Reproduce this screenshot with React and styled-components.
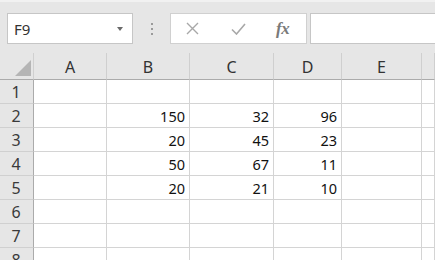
import React from "react";
import styled, { createGlobalStyle } from "styled-components";

const GlobalStyle = createGlobalStyle`
  html, body {
    margin: 0;
    padding: 0;
    background: #ffffff;
    overflow: hidden;
  }
  body {
    font-family: "Noto Sans", "Open Sans", sans-serif;
  }
`;

const Page = styled.div`
  width: 435px;
  height: 260px;
  overflow: hidden;
  background: #fff;
`;

// formula bar strip
const Toolbar = styled.div`
  height: 53px;
  box-sizing: border-box;
  background: #e6e6e6;
  border-top: 2px solid #f1f1f1;
  display: flex;
  align-items: flex-start;
  padding: 11px 0 0 7px;
`;

const NameBox = styled.div`
  width: 126px;
  height: 31px;
  box-sizing: border-box;
  background: #fff;
  border: 1px solid #c6c6c6;
  display: flex;
  align-items: center;
  justify-content: space-between;
  padding: 0 9px 0 6px;
  font-size: 15px;
  color: #333;
`;

const DropArrow = styled.span`
  width: 0;
  height: 0;
  border-left: 3.5px solid transparent;
  border-right: 3.5px solid transparent;
  border-top: 4px solid #6a6a6a;
`;

const Grip = styled.div`
  width: 37px;
  height: 31px;
  display: flex;
  flex-direction: column;
  align-items: center;
  justify-content: center;
  gap: 3px;
  padding-top: 1px;
  box-sizing: border-box;
`;

const Dot = styled.span`
  width: 2px;
  height: 2px;
  background: #9a9a9a;
`;

const FormulaButtons = styled.div`
  width: 137px;
  height: 31px;
  box-sizing: border-box;
  background: #fff;
  border: 1px solid #d0d0d0;
  display: flex;
  align-items: center;
  padding-left: 15px;
  gap: 0;
`;

const IconSlot = styled.span`
  width: ${(p) => p.$w}px;
  display: flex;
  align-items: center;
  justify-content: flex-start;
`;

const Fx = styled.span`
  font-family: "Liberation Serif", "DejaVu Serif", serif;
  font-style: italic;
  font-weight: bold;
  font-size: 17px;
  color: #7a7a7a;
  letter-spacing: -0.5px;
`;

const FormulaInput = styled.div`
  flex: 1;
  height: 31px;
  margin-left: 3px;
  box-sizing: border-box;
  background: #fff;
  border: 1px solid #c6c6c6;
  border-right: none;
`;

// sheet grid
const Sheet = styled.div`
  display: grid;
  grid-template-columns: 34px 73px 83px 84px 68px 80px 1fr;
  grid-template-rows: 27px repeat(8, 24px);
`;

const HeadCell = styled.div`
  box-sizing: border-box;
  background: #e6e6e6;
  border-right: 1px solid ${(p) => (p.$corner ? "#d0d0d0" : "#cfcfcf")};
  border-bottom: 1px solid #ababab;
  display: flex;
  align-items: center;
  justify-content: center;
  font-size: 16px;
  color: #333;
  padding-top: 2px;
`;

const Corner = styled(HeadCell)`
  align-items: flex-end;
  justify-content: flex-end;
  padding: 0 2px 3px 0;
`;

const Triangle = styled.span`
  width: 16px;
  height: 16px;
  background: #b5b5b5;
  clip-path: polygon(100% 0, 100% 100%, 0 100%);
`;

const RowHead = styled.div`
  box-sizing: border-box;
  background: #e6e6e6;
  border-right: 1px solid #ababab;
  border-bottom: 1px solid #d0d0d0;
  display: flex;
  align-items: center;
  justify-content: center;
  font-size: 16px;
  color: #3a3a3a;
  padding-right: 1px;
`;

const Cell = styled.div`
  box-sizing: border-box;
  border-right: 1px solid #d4d4d4;
  border-bottom: 1px solid #d4d4d4;
  display: flex;
  align-items: center;
  justify-content: flex-end;
  padding: 1px 4px 0 0;
  font-size: 14.5px;
  color: #111;
`;

const columns = ["A", "B", "C", "D", "E", ""];

const data = {
  2: [150, 32, 96],
  3: [20, 45, 23],
  4: [50, 67, 11],
  5: [20, 21, 10],
};

const App = () => {
  const rows = [1, 2, 3, 4, 5, 6, 7, 8];

  return (
    <Page>
      <GlobalStyle />
      <Toolbar>
        <NameBox>
          F9
          <DropArrow />
        </NameBox>
        <Grip>
          <Dot />
          <Dot />
          <Dot />
        </Grip>
        <FormulaButtons>
          <IconSlot $w={45}>
            <svg width="13" height="13" viewBox="0 0 13 13">
              <path d="M1 1 L12 12 M12 1 L1 12" stroke="#a8a8a8" strokeWidth="1.4" fill="none" />
            </svg>
          </IconSlot>
          <IconSlot $w={45}>
            <svg width="15" height="12" viewBox="0 0 15 12">
              <path d="M1 6.5 L5.5 11 L14 1" stroke="#a8a8a8" strokeWidth="1.6" fill="none" />
            </svg>
          </IconSlot>
          <IconSlot $w={20}>
            <Fx>fx</Fx>
          </IconSlot>
        </FormulaButtons>
        <FormulaInput />
      </Toolbar>

      <Sheet>
        <Corner $corner>
          <Triangle />
        </Corner>
        {columns.map((c, i) => (
          <HeadCell key={i}>{c}</HeadCell>
        ))}
        {rows.map((r) => (
          <React.Fragment key={r}>
            <RowHead>{r}</RowHead>
            <Cell />
            {[0, 1, 2].map((k) => (
              <Cell key={k}>{data[r] ? data[r][k] : ""}</Cell>
            ))}
            <Cell />
            <Cell />
          </React.Fragment>
        ))}
      </Sheet>
    </Page>
  );
};

export default App;
